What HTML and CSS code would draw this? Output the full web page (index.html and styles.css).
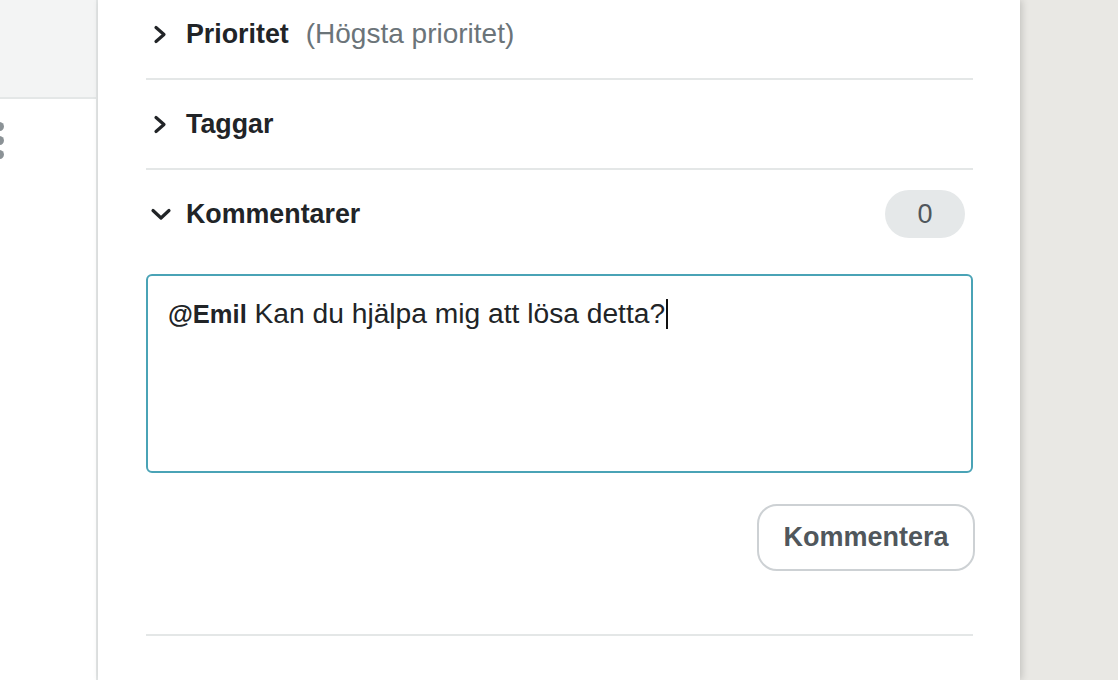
FILE: index.html
```html
<!DOCTYPE html>
<html lang="sv">
<head>
<meta charset="utf-8">
<title>Kommentarer</title>
<link rel="stylesheet" href="styles.css">
</head>
<body>
  <aside class="sidebar">
    <div class="sidebar-top"></div>
    <div class="kebab"><span class="dot"></span><span class="dot"></span><span class="dot"></span></div>
  </aside>
  <main class="panel">
    <div class="sections">
      <div class="row">
        <span class="chev"><svg class="chev-right" width="14" height="19" viewBox="0 0 14 19"><path d="M3 2.5 L11 9.5 L3 16.5" fill="none" stroke="#212427" stroke-width="3.2" stroke-linecap="round" stroke-linejoin="round"/></svg></span>
        <span class="title">Prioritet</span>
        <span class="sub">(Högsta prioritet)</span>
      </div>
      <div class="row">
        <span class="chev"><svg class="chev-right" width="14" height="19" viewBox="0 0 14 19"><path d="M3 2.5 L11 9.5 L3 16.5" fill="none" stroke="#212427" stroke-width="3.2" stroke-linecap="round" stroke-linejoin="round"/></svg></span>
        <span class="title">Taggar</span>
      </div>
      <div class="comments">
        <div class="row row-open">
          <span class="chev"><svg class="chev-down" width="22" height="15" viewBox="0 0 22 15"><path d="M3 3.5 L11 11 L19 3.5" fill="none" stroke="#212427" stroke-width="3.2" stroke-linecap="round" stroke-linejoin="round"/></svg></span>
          <span class="title">Kommentarer</span>
          <span class="badge">0</span>
        </div>
        <div class="editor"><b class="mention">@Emil</b> Kan du hjälpa mig att lösa detta?<span class="caret"></span></div>
        <div class="actions"><button class="btn">Kommentera</button></div>
      </div>
    </div>
  </main>
  <div class="backdrop"></div>
</body>
</html>
```
FILE: styles.css
```css
html, body {
  margin: 0;
  padding: 0;
  height: 680px;
  overflow: hidden;
}
body {
  display: flex;
  font-family: "Liberation Sans", Arial, Helvetica, sans-serif;
  color: #212427;
  background: #e9e8e4;
}
.sidebar {
  width: 96px;
  flex: none;
  background: #fff;
  border-right: 2px solid #e4e7e7;
}
.sidebar-top {
  height: 97px;
  background: #f3f4f4;
  border-bottom: 2px solid #e4e7e7;
}
.kebab {
  display: flex;
  flex-direction: column;
  gap: 5px;
  margin-top: 23px;
  margin-left: -5px;
}
.dot {
  width: 9px;
  height: 9px;
  border-radius: 50%;
  background: #8b9296;
}
.panel {
  width: 922px;
  flex: none;
  box-sizing: border-box;
  padding: 0 47px 0 48px;
  background: #fff;
  box-shadow: 2px 0 7px rgba(0, 0, 0, 0.16);
  position: relative;
  z-index: 1;
}
.sections {
  margin-top: -10px;
}
.row {
  height: 88px;
  display: flex;
  align-items: center;
  border-bottom: 2px solid #e4e7e7;
}
.row-open {
  border-bottom: none;
}
.chev {
  width: 40px;
  flex: none;
  display: flex;
  align-items: center;
}
.chev-right {
  margin-left: 7px;
}
.chev-down {
  margin-left: 4px;
  margin-top: 1px;
}
.title {
  font-size: 26.8px;
  font-weight: bold;
  color: #212427;
}
.sub {
  font-size: 28px;
  color: #6b7479;
  margin-left: 17px;
}
.badge {
  margin-left: auto;
  margin-right: 8px;
  width: 80px;
  height: 48px;
  border-radius: 24px;
  background: #e5e8e9;
  color: #50575c;
  font-size: 27px;
  display: flex;
  align-items: center;
  justify-content: center;
}
.comments {
  border-bottom: 2px solid #e4e7e7;
  padding-bottom: 63px;
}
.editor {
  margin-top: 16px;
  height: 199px;
  box-sizing: border-box;
  border: 2px solid #4aa3b6;
  border-radius: 6px;
  padding: 21px 20px;
  font-size: 28.2px;
  line-height: 32px;
  color: #212427;
}
.mention {
  font-weight: bold;
  font-size: 25.5px;
}
.caret {
  display: inline-block;
  width: 1.5px;
  height: 30px;
  background: #111;
  vertical-align: -6px;
  margin-left: 1px;
}
.actions {
  display: flex;
  justify-content: flex-end;
  margin-top: 31px;
  margin-right: -2px;
}
.btn {
  width: 218px;
  height: 67px;
  box-sizing: border-box;
  border: 2px solid #cdd1d4;
  border-radius: 20px;
  background: #fff;
  font-family: "Liberation Sans", Arial, Helvetica, sans-serif;
  font-size: 27px;
  font-weight: bold;
  color: #50575c;
  padding: 0;
}
.backdrop {
  flex: 1;
  background: #e9e8e4;
}
```
